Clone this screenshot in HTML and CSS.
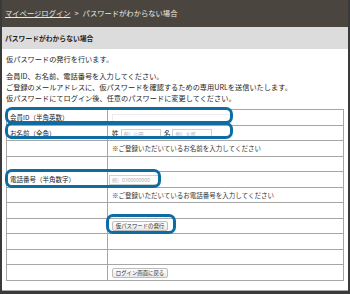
FILE: index.html
```html
<!DOCTYPE html>
<html lang="ja">
<head>
  <meta charset="UTF-8">
  <meta name="viewport" content="width=device-width, initial-scale=1.0">
  <title>パスワードがわからない場合</title>
  <link rel="stylesheet" href="styles.css">
</head>
<body>
  <div class="page">
    <div class="topbar">
      <a href="#" class="crumb-link">マイページログイン</a><span class="crumb-sep">&gt;</span><span>パスワードがわからない場合</span>
    </div>
    <div class="title-bar">パスワードがわからない場合</div>

    <div class="content">
      <p class="lead">仮パスワードの発行を行います。</p>
      <p class="lead">会員ID、お名前、電話番号を入力してください。<br>
        ご登録のメールアドレスに、仮パスワードを確認するための専用URLを送信いたします。<br>
        仮パスワードにてログイン後、任意のパスワードに変更してください。</p>

      <div class="form-wrap">
        <table class="form-table">
          <tr>
            <td class="label">会員ID（半角英数）</td>
            <td><input type="text" class="field field-id"></td>
          </tr>
          <tr>
            <td class="label">お名前（全角）</td>
            <td>
              <span class="name-pre">姓</span><input type="text" class="field field-name" placeholder="例）山田">
              <span class="name-pre">名</span><input type="text" class="field field-name" placeholder="例）太郎">
            </td>
          </tr>
          <tr>
            <td class="label"></td>
            <td class="note">※ご登録いただいているお名前を入力してください</td>
          </tr>
          <tr><td class="label"></td><td></td></tr>
          <tr>
            <td class="label">電話番号（半角数字）</td>
            <td class="tight"><input type="text" class="field field-tel" placeholder="例）0300000000"></td>
          </tr>
          <tr>
            <td class="label"></td>
            <td class="note">※ご登録いただいているお電話番号を入力してください</td>
          </tr>
          <tr><td class="label"></td><td></td></tr>
          <tr>
            <td class="label"></td>
            <td><button type="button" class="btn">仮パスワードの発行</button></td>
          </tr>
          <tr><td class="label"></td><td></td></tr>
          <tr><td class="label"></td><td></td></tr>
          <tr>
            <td class="label"></td>
            <td><button type="button" class="btn">ログイン画面に戻る</button></td>
          </tr>
        </table>

        <!-- 注釈の枠 -->
        <div class="mark mark-id"></div>
        <div class="mark mark-name"></div>
        <div class="mark mark-tel"></div>
        <div class="mark mark-btn"></div>
      </div>
    </div>
  </div>
</body>
</html>
```

FILE: styles.css
```css
html {
  background-color: #3a3a3a;
}
body {
  margin: 0;
  font-family: "Noto Sans CJK JP", "Liberation Serif", serif;
  color: #222;
}
.page {
  background-color: #fff;
  margin: 0 2px;
  height: 290px;
  border-bottom: 1px solid #a8a8a8;
  overflow: hidden;
}
.topbar {
  background-color: #4a453e;
  color: #ece8e0;
  height: 27px;
  line-height: 27px;
  padding-left: 3px;
  font-size: 7.3px;
  white-space: nowrap;
}
.crumb-link {
  color: #ece8e0;
  text-decoration: underline;
}
.crumb-sep {
  margin: 0 4px;
}
.title-bar {
  background-color: #dcdcdc;
  height: 22px;
  line-height: 22px;
  padding-left: 3px;
  font-size: 6.8px;
  font-weight: bold;
  color: #1e1e1e;
}
.content {
  padding: 5px 4px 0 4px;
}
.lead {
  margin: 0 0 6px 0;
  font-size: 7.2px;
  line-height: 11px;
  color: #1e1e1e;
  white-space: nowrap;
}
.form-wrap {
  position: relative;
  margin-top: -1px;
}
.form-table {
  width: 100%;
  border-collapse: collapse;
  font-size: 6.5px;
}
.form-table tr {
  height: 15.5px;
}
.form-table td {
  border: 1px solid #a6a6a6;
  padding: 0 4px;
  white-space: nowrap;
}
.form-table td.label {
  width: 93px;
  padding-left: 3px;
}
.form-table td.tight {
  padding-left: 1px;
}
.field {
  border: 1px solid #d0d0d0;
  height: 9px;
  padding: 0 2px;
  font-size: 5px;
  font-family: inherit;
  vertical-align: middle;
  box-sizing: border-box;
}
.field::placeholder {
  color: #b0b0b0;
}
.field-id {
  width: 120px;
  border-color: #ececec;
}
.field-name {
  width: 40px;
  margin: 0 2px 0 2px;
}
.field-tel {
  width: 51px;
  height: 10px;
}
.name-pre {
  vertical-align: middle;
}
.note {
  color: #333;
}
.btn {
  font-family: inherit;
  font-size: 5.4px;
  height: 10px;
  width: 56px;
  padding: 0;
  line-height: 8px;
  color: #333;
  background: linear-gradient(#fdfdfd, #e9e9e9);
  border: 1px solid #bdbdbd;
  border-radius: 2px;
  vertical-align: middle;
}
.mark {
  position: absolute;
  border: 3px solid #0c6ca3;
  border-radius: 7px;
  box-sizing: border-box;
}
.mark-id {
  left: -1px;
  top: -2px;
  width: 228px;
  height: 17px;
}
.mark-name {
  left: -1px;
  top: 13px;
  width: 228px;
  height: 17px;
}
.mark-tel {
  left: -1px;
  top: 60px;
  width: 156px;
  height: 19px;
}
.mark-btn {
  left: 100px;
  top: 105px;
  width: 70px;
  height: 20px;
}
```
